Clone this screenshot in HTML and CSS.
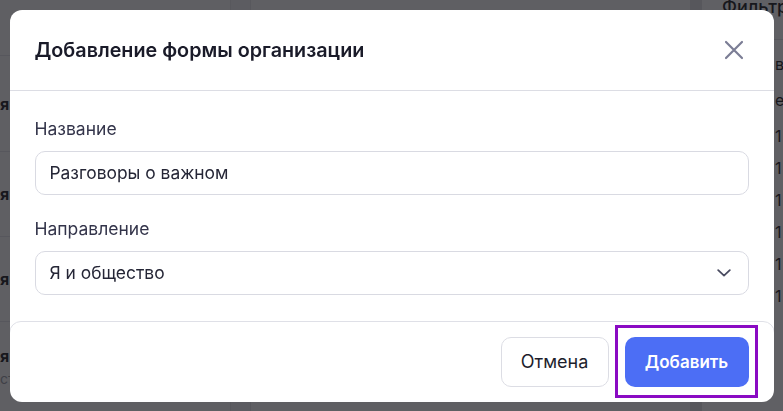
FILE: index.html
```html
<!DOCTYPE html>
<html lang="ru">
<head>
<meta charset="utf-8">
<title>Добавление формы организации</title>
<link rel="stylesheet" href="styles.css">
</head>
<body>
<div class="page">
  <section class="table">
    <div class="row"></div>
    <div class="row"><span class="cell-text">я</span></div>
    <div class="row"><span class="cell-text">я</span></div>
    <div class="row"><span class="cell-text">я</span></div>
    <div class="row row-last"><span class="cell-text">я</span><span class="cell-sub">ст</span></div>
  </section>
  <div class="col-divider"></div>
  <section class="table-wide"></section>
  <div class="scrollbar"></div>
  <aside class="filters">
    <h3 class="filters-title">Фильтр</h3>
    <ul class="filter-list">
      <li>вл</li>
      <li>е</li>
      <li>1</li>
      <li>1</li>
      <li>1</li>
      <li>1</li>
      <li>1</li>
      <li>1</li>
    </ul>
  </aside>
</div>

<div class="overlay">
  <div class="dialog" role="dialog" aria-labelledby="dlg-title">
    <header class="dialog-header">
      <h2 class="dialog-title" id="dlg-title">Добавление формы организации</h2>
      <button class="close-btn" type="button" aria-label="Закрыть">
        <svg width="20" height="20" viewBox="0 0 20 20" fill="none">
          <path d="M2 2L18 18M18 2L2 18" stroke="currentColor" stroke-width="2.2" stroke-linecap="round"/>
        </svg>
      </button>
    </header>
    <div class="dialog-body">
      <label class="field">
        <span class="field-label">Название</span>
        <span class="input">Разговоры о важном</span>
      </label>
      <label class="field">
        <span class="field-label">Направление</span>
        <span class="input select">
          <span>Я и общество</span>
          <svg class="chevron" width="14" height="8" viewBox="0 0 14 8" fill="none">
            <path d="M1.2 1.2L7 6.6L12.8 1.2" stroke="currentColor" stroke-width="1.8" stroke-linecap="round" stroke-linejoin="round"/>
          </svg>
        </span>
      </label>
    </div>
    <footer class="dialog-footer">
      <button class="btn btn-secondary" type="button">Отмена</button>
      <button class="btn btn-primary highlighted" type="button">Добавить</button>
    </footer>
  </div>
</div>
</body>
</html>
```

FILE: styles.css
```css
* { box-sizing: border-box; }

html, body {
  margin: 0;
  padding: 0;
  width: 783px;
  height: 411px;
  overflow: hidden;
  font-family: "Inter", "Noto Sans", "Liberation Sans", sans-serif;
  background: #ffffff;
}

/* Background page (dimmed behind the modal) */
.page {
  display: grid;
  grid-template-columns: 230px 21px 1fr 12px 81px;
  height: 411px;
  background: #fbfbfc;
}

.table {
  display: flex;
  flex-direction: column;
}

.row {
  height: 85px;
  border-bottom: 1px solid #e4e4e8;
  display: flex;
  flex-direction: column;
  justify-content: center;
  font-size: 16px;
  font-weight: 700;
  color: #1c1d24;
}
.row:first-child { height: 56px; }
.row:nth-child(2) { height: 96px; }
.row-last { border-bottom: 0; justify-content: flex-start; padding-top: 24px; }

.cell-sub {
  font-weight: 400;
  font-size: 14px;
  color: #9a9ba5;
  margin-top: 4px;
}

.col-divider { background: #f1f1f4; border-left: 1px solid #e6e6ea; border-right: 1px solid #e6e6ea; }
.table-wide { background: #fbfbfc; }
.scrollbar { background: #e3e3e7; }

.filters {
  padding-left: 20px;
  background: #ffffff;
}
.filters-title {
  margin: -4px 0 0;
  font-size: 18px;
  font-weight: 500;
  color: #1c1d24;
  height: 44px;
  border-bottom: 1px solid #e4e4e8;
  white-space: nowrap;
}
.filter-list {
  list-style: none;
  margin: 8px 0 0 53px;
  padding: 0;
  font-size: 16px;
  color: #1c1d24;
}
.filter-list li { height: 32px; line-height: 32px; }
.filter-list li:nth-child(2) { height: 40px; line-height: 40px; }

/* Modal overlay */
.overlay {
  position: fixed;
  inset: 0;
  background: rgba(20, 21, 27, 0.68);
  display: flex;
  align-items: center;
  justify-content: center;
}

.dialog {
  width: 764px;
  height: 392px;
  background: #ffffff;
  border-radius: 12px;
  overflow: hidden;
  display: flex;
  flex-direction: column;
}

.dialog-header {
  height: 81px;
  flex: none;
  display: flex;
  align-items: center;
  justify-content: space-between;
  padding: 0 30px 0 25px;
  border-bottom: 1px solid #dcdde4;
}

.dialog-title {
  margin: 0;
  font-size: 19.75px;
  font-weight: 600;
  color: #1a1b29;
  letter-spacing: 0;
}

.close-btn {
  border: 0;
  background: none;
  padding: 0;
  width: 20px;
  height: 20px;
  color: #7b7d95;
  display: flex;
  cursor: pointer;
}

.dialog-body {
  flex: 1;
  padding: 25px 25px 0;
  display: flex;
  flex-direction: column;
  gap: 21px;
}

.field {
  display: flex;
  flex-direction: column;
  gap: 9px;
}

.field-label {
  font-size: 17.5px;
  line-height: 26px;
  color: #33344a;
}

.input {
  height: 44px;
  border: 1px solid #d9dae2;
  border-radius: 10px;
  padding: 0 14px;
  display: flex;
  align-items: center;
  font-size: 17.4px;
  color: #252636;
}

.select {
  justify-content: space-between;
  padding-right: 17px;
}

.chevron { color: #4a4c61; }

.dialog-footer {
  flex: none;
  height: 82px;
  margin: 0 -1px -1px;
  border: 1px solid #dfe0e7;
  border-radius: 12px 12px 0 0;
  display: flex;
  justify-content: flex-end;
  align-items: flex-start;
  gap: 16px;
  padding: 15px 25px 0 0;
}

.btn {
  height: 50px;
  border-radius: 10px;
  font-family: inherit;
  cursor: pointer;
}

.btn-secondary {
  width: 108px;
  background: #ffffff;
  border: 1px solid #dcdde4;
  color: #1d1e2c;
  font-size: 18px;
  font-weight: 400;
}

.btn-primary {
  width: 124px;
  background: #4c6ef5;
  border: 0;
  color: #ffffff;
  font-size: 17px;
  font-weight: 600;
}

.highlighted { position: relative; }
.highlighted::after {
  content: "";
  position: absolute;
  top: -12px;
  bottom: -11px;
  left: -10px;
  right: -9px;
  border: 3px solid #8a0bc3;
  pointer-events: none;
}
```
